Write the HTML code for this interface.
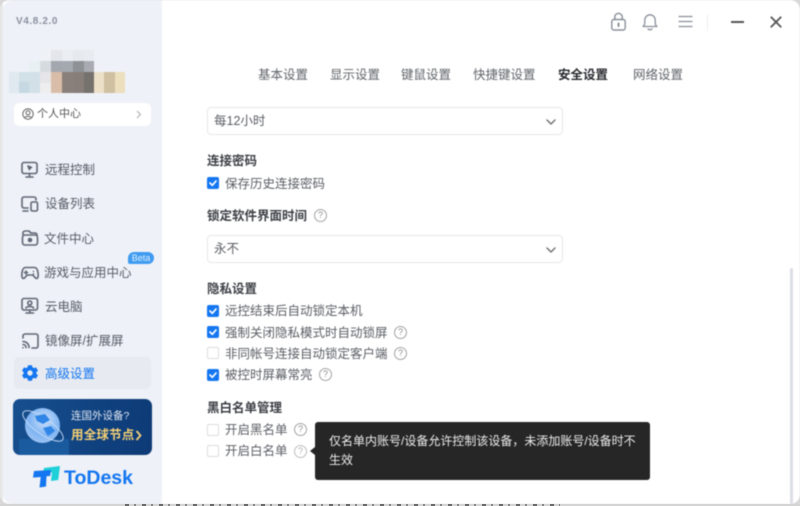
<!DOCTYPE html>
<html lang="zh"><head><meta charset="utf-8"><style>
*{box-sizing:border-box}
html,body{margin:0;padding:0;width:800px;height:506px;overflow:hidden;background:#d8d8d8}
body{position:relative;font-family:"Liberation Sans","Noto Sans CJK SC",sans-serif;color:#555a63}
.abs{position:absolute}
.t{position:absolute;white-space:nowrap;line-height:16px}
#win{position:absolute;left:0;top:0;width:800px;height:504px;background:#fff;border-radius:10px;overflow:hidden;filter:blur(.4px)}
#side{position:absolute;left:3px;top:0;width:159px;height:504px;background:#eef1f7;border-radius:10px 0 0 10px}
#leftedge{position:absolute;left:0;top:0;width:3px;height:504px;background:#e8e8e8}
.nav{position:absolute;left:44px;font-size:12.5px;color:#565b66;line-height:16px;white-space:nowrap}
.ni{position:absolute;left:20px;width:20px;height:20px;fill:none;stroke:#5f6675;stroke-width:1.6;stroke-linecap:round;stroke-linejoin:round}
.tab{position:absolute;top:67px;font-size:12.5px;color:#5f6368;line-height:16px;white-space:nowrap}
.h{position:absolute;left:207px;font-size:12.5px;font-weight:700;color:#3c3f45;line-height:16px;white-space:nowrap}
.l{position:absolute;left:225px;font-size:12.5px;color:#5b5e64;line-height:16px;white-space:nowrap}
.c{position:absolute;left:207px;width:12px;height:12px;border-radius:2px;background:#1476f0}
.c svg{position:absolute;left:0;top:0;width:12px;height:12px;fill:none;stroke:#fff;stroke-width:1.7;stroke-linecap:round;stroke-linejoin:round}
.u{position:absolute;left:207px;width:12px;height:12px;border-radius:2px;background:#fff;border:1px solid #dcdcdc}
.q{position:absolute;width:13px;height:13px;border:1px solid #a2a2a2;border-radius:50%;font-size:9px;line-height:11px;text-align:center;color:#8d8d8d}
.sel{position:absolute;left:207px;width:356px;height:28px;border:1px solid #e7e7e7;border-radius:4px;background:#fff}
.sel span{position:absolute;left:6px;top:5px;font-size:12.5px;line-height:16px;color:#5b5e64;white-space:nowrap}
.sel svg{position:absolute;left:337px;top:8px;width:12px;height:12px;fill:none;stroke:#6d6d6d;stroke-width:1.4;stroke-linecap:round;stroke-linejoin:round}
.px{position:absolute}
</style></head><body>
<div id="win">
<div id="leftedge"></div>
<div id="side"></div>
<div class="t" style="left:16px;top:14px;font-size:10px;font-weight:700;color:#8a90a0;letter-spacing:.6px">V4.8.2.0</div>

<!-- blurred avatar / name mosaic -->
<div class="px" style="left:40px;top:50px;width:11px;height:11px;background:#eef1f5"></div>
<div class="px" style="left:51px;top:50px;width:11px;height:11px;background:#e3e6eb"></div>
<div class="px" style="left:62px;top:50px;width:11px;height:11px;background:#eaedf2"></div>
<div class="px" style="left:73px;top:50px;width:11px;height:11px;background:#e6e9ed"></div>
<div class="px" style="left:84px;top:50px;width:10px;height:11px;background:#e8ebef"></div>
<div class="px" style="left:29px;top:61px;width:11px;height:11px;background:#e8f0f3"></div>
<div class="px" style="left:40px;top:61px;width:11px;height:11px;background:#d6dbe0"></div>
<div class="px" style="left:51px;top:61px;width:11px;height:11px;background:#a3a7ae"></div>
<div class="px" style="left:62px;top:61px;width:11px;height:11px;background:#a4a8af"></div>
<div class="px" style="left:73px;top:61px;width:11px;height:11px;background:#8e9297"></div>
<div class="px" style="left:84px;top:61px;width:10px;height:11px;background:#a8abb1"></div>
<div class="px" style="left:9px;top:72px;width:10px;height:21px;background:#dfe9ef"></div>
<div class="px" style="left:19px;top:72px;width:21px;height:10px;background:#d2e0e8"></div>
<div class="px" style="left:19px;top:82px;width:10px;height:11px;background:#c6d8e2"></div>
<div class="px" style="left:29px;top:82px;width:11px;height:11px;background:#d2e0e8"></div>
<div class="px" style="left:40px;top:72px;width:11px;height:11px;background:#e6e6e8"></div>
<div class="px" style="left:40px;top:83px;width:11px;height:10px;background:#eeeeee"></div>
<div class="px" style="left:51px;top:72px;width:11px;height:21px;background:#dabda8"></div>
<div class="px" style="left:62px;top:72px;width:11px;height:21px;background:#8a807b"></div>
<div class="px" style="left:73px;top:72px;width:11px;height:21px;background:#877e7a"></div>
<div class="px" style="left:84px;top:72px;width:10px;height:21px;background:#75716d"></div>
<div class="px" style="left:94px;top:72px;width:10px;height:21px;background:#ece0c8"></div>
<div class="px" style="left:104px;top:72px;width:11px;height:21px;background:#d0c0a2"></div>
<div class="px" style="left:115px;top:72px;width:10px;height:21px;background:#ecdfbe"></div>

<!-- personal center -->
<div class="abs" style="left:14px;top:103px;width:137px;height:23px;background:#fff;border-radius:5px"></div>
<svg class="abs" style="left:22px;top:108px;width:12px;height:12px;fill:none;stroke:#666;stroke-width:1" viewBox="0 0 12 12"><circle cx="6" cy="6" r="5.2"/><circle cx="6" cy="4.8" r="2"/><path d="M2.8 9.6c1-1.6 5.4-1.6 6.4 0"/></svg>
<div class="t" style="left:37px;top:106px;font-size:11px;color:#555">个人中心</div>
<svg class="abs" style="left:136px;top:110px;width:6px;height:9px;fill:none;stroke:#aaa;stroke-width:1" viewBox="0 0 6 9"><path d="M1 1l3.5 3.5L1 8"/></svg>

<!-- nav -->
<svg class="ni" style="top:160px" viewBox="0 0 20 20"><rect x="2" y="2.5" width="15" height="11" rx="2"/><path d="M9.5 13.5v3M6 17h7"/><path d="M8 6l3.5 1.5-1.5.6-.6 1.5z" fill="#5f6675"/></svg>
<div class="nav" style="top:162px;left:45px">远程控制</div>
<svg class="ni" style="top:194px" viewBox="0 0 20 20"><path d="M8 14H4a2 2 0 0 1-2-2V5a2 2 0 0 1 2-2h10a2 2 0 0 1 2 2v1"/><rect x="11" y="8" width="6.5" height="9" rx="1.5"/><path d="M3 17h5"/></svg>
<div class="nav" style="top:196px;left:45px">设备列表</div>
<svg class="ni" style="top:228px" viewBox="0 0 20 20"><path d="M3 7V5a2 2 0 0 1 2-2h4l2 2h4a2 2 0 0 1 2 2"/><rect x="2.5" y="7" width="15" height="10" rx="2.500"/><circle cx="10" cy="12" r="1.5" fill="#5f6675"/></svg>
<div class="nav" style="top:231px">文件中心</div>
<svg class="ni" style="top:263px" viewBox="0 0 20 20"><path d="M5.5 4.5h9c2 0 3 1.500 3.500 5 .5 3.500 0 6-1.500 6-1.500 0-2.500-3-4-3.500H7.500c-1.500.5-2.500 3.500-4 3.500S1.500 13 2 9.500c.5-3.500 1.500-5 3.500-5z"/><path d="M6 8v3M4.500 9.500h3M13.500 8.500v.01M13.500 11v.01"/></svg>
<div class="nav" style="top:265px">游戏与应用中心</div>
<div class="abs" style="left:128px;top:252px;width:26px;height:12px;background:#3f9bf0;border-radius:6px 6px 6px 2px;color:#dcefff;font-size:9px;line-height:12px;text-align:center">Beta</div>
<svg class="ni" style="top:296px" viewBox="0 0 20 20"><rect x="2" y="2.5" width="15.500" height="11.500" rx="2"/><path d="M9.800 14v2.500M6 17h7.500"/><circle cx="9.800" cy="7" r="2"/><path d="M6 12c.5-2 7-2 7.500 0"/></svg>
<div class="nav" style="top:299px;left:45px">云电脑</div>
<svg class="ni" style="top:331px" viewBox="0 0 20 20"><path d="M3 7V5a2 2 0 0 1 2-2h11a2 2 0 0 1 2 2v10a2 2 0 0 1-2 2h-4"/><path d="M3 10.500c3.500 0 6 2.500 6 6M3 13.500c1.700 0 3 1.300 3 3"/><path d="M3 16.700v.01"/></svg>
<div class="nav" style="top:333px;left:45px">镜像屏/扩展屏</div>
<div class="abs" style="left:14px;top:357px;width:137px;height:32px;background:#e7ebf1;border-radius:5px"></div>
<svg class="abs" style="left:21px;top:364px;width:18px;height:18px" viewBox="0 0 18 18"><path fill="#1476f0" fill-rule="evenodd" d="M7 1.200h4l.5 2.200 1.300.7 2.200-.7 2 3.400-1.700 1.500v1.400l1.700 1.500-2 3.400-2.200-.7-1.300.7-.5 2.200H7l-.5-2.200-1.300-.7-2.200.7-2-3.400 1.700-1.500V8.300L1 6.800l2-3.400 2.200.7 1.300-.7zM9 6.300a2.700 2.700 0 1 0 0 5.400 2.700 2.700 0 0 0 0-5.400z"/></svg>
<div class="nav" style="top:366px;left:45px;color:#1476f0">高级设置</div>

<!-- banner -->
<div class="abs" style="left:13px;top:399px;width:139px;height:56px;border-radius:7px;background:linear-gradient(100deg,#17508f,#0f3f7d 70%,#0e3b76);overflow:hidden">
  <div class="abs" style="left:6px;top:40px;width:50px;height:16px;background:#1a5a9e"></div>
  <div class="abs" style="left:12px;top:9px;width:35px;height:35px;border-radius:50%;background:radial-gradient(circle at 55% 35%,#cfe2fb,#7fb4f2 50%,#a9c9f5 90%)"></div>
  <svg class="abs" style="left:6px;top:5px;width:48px;height:44px;fill:none;stroke:#c6dcf6;stroke-width:.9" viewBox="0 0 48 44"><ellipse cx="24" cy="22" rx="24" ry="8" transform="rotate(35 24 22)"/><path fill="#2f86e6" stroke="none" d="M16 12l10-2 5 6-7 4-6-3zM24 24l8-2 4 5-7 5z"/></svg>
</div>
<div class="t" style="left:71px;top:408px;font-size:10.5px;color:#dfe7f2">连国外设备?</div>
<div class="t" style="left:71px;top:427px;font-size:12.5px;font-weight:700;color:#f4cf74;letter-spacing:.2px">用全球节点</div>
<svg class="abs" style="left:135px;top:430px;width:8px;height:11px;fill:none;stroke:#f4cf74;stroke-width:1.8" viewBox="0 0 8 11"><path d="M1.500 1l4 4.500-4 4.500"/></svg>

<!-- logo -->
<svg class="abs" style="left:33px;top:465px;width:28px;height:23px" viewBox="0 0 28 23"><path fill="#1fd0d8" d="M11 3L27 1l-1.800 14-7.200 1 1-8.500-9 .8z"/><path fill="#1476f0" d="M1 6l17-1-.8 6-3.700.3L13 21.500l-6.500 1L7.700 12 0 12.600z"/></svg>
<div class="t" style="left:64px;top:468px;font-size:19.5px;line-height:20px;font-weight:700;color:#1476f0">ToDesk</div>

<!-- top icons -->
<svg class="abs" style="left:610px;top:12px;width:17px;height:20px;fill:none;stroke:#8a8f9a;stroke-width:1.4;stroke-linecap:round" viewBox="0 0 17 20"><rect x="1.800" y="7.500" width="13.400" height="10.500" rx="2"/><path d="M4.800 7.500V5a3.700 3.700 0 0 1 7.400 0v2.500"/><path d="M8.500 11.500v2.500" stroke-width="2"/></svg>
<svg class="abs" style="left:641px;top:13px;width:18px;height:18px;fill:none;stroke:#8a8f9a;stroke-width:1.3;stroke-linecap:round;stroke-linejoin:round" viewBox="0 0 18 18"><path d="M2 13.500c1.300-1 1.800-2 1.800-4V7a5.200 5.200 0 0 1 10.400 0v2.500c0 2 .5 3 1.800 4z"/><path d="M7 16c1 1 3 1 4 0"/></svg>
<svg class="abs" style="left:678px;top:15px;width:15px;height:13px;stroke:#8a8f9a;stroke-width:1.3;fill:none" viewBox="0 0 15 13"><path d="M.5 1.500h14M.5 6.500h14M.5 11.500h14"/></svg>
<div class="abs" style="left:707px;top:14px;width:1px;height:17px;background:#eeeeee"></div>
<div class="abs" style="left:731px;top:21px;width:13px;height:2px;background:#555"></div>
<svg class="abs" style="left:770px;top:16px;width:12px;height:12px;stroke:#555;stroke-width:1.8;fill:none" viewBox="0 0 12 12"><path d="M.8.800l10.400 10.400M11.200.800L.8 11.200"/></svg>

<!-- tabs -->
<div class="tab" style="left:258px">基本设置</div>
<div class="tab" style="left:330px">显示设置</div>
<div class="tab" style="left:401px">键鼠设置</div>
<div class="tab" style="left:473px">快捷键设置</div>
<div class="tab" style="left:558px;color:#27292d;font-weight:700">安全设置</div>
<div class="tab" style="left:633px">网络设置</div>

<!-- content -->
<div class="sel" style="top:107px"><span>每12小时</span><svg viewBox="0 0 12 12"><path d="M2 4l4 4 4-4"/></svg></div>
<div class="h" style="top:153px">连接密码</div>
<div class="c" style="top:177px"><svg viewBox="0 0 12 12"><path d="M3 6l2.300 2.300L9 4"/></svg></div>
<div class="l" style="top:176px">保存历史连接密码</div>
<div class="h" style="top:208px">锁定软件界面时间</div>
<div class="q" style="left:314px;top:209px">?</div>
<div class="sel" style="top:235px"><span>永不</span><svg viewBox="0 0 12 12"><path d="M2 4l4 4 4-4"/></svg></div>
<div class="h" style="top:281px">隐私设置</div>
<div class="c" style="top:305px"><svg viewBox="0 0 12 12"><path d="M3 6l2.300 2.300L9 4"/></svg></div>
<div class="l" style="top:303px">远控结束后自动锁定本机</div>
<div class="c" style="top:326px"><svg viewBox="0 0 12 12"><path d="M3 6l2.300 2.300L9 4"/></svg></div>
<div class="l" style="top:325px">强制关闭隐私模式时自动锁屏</div>
<div class="q" style="left:394px;top:326px">?</div>
<div class="u" style="top:347px"></div>
<div class="l" style="top:346px">非同帐号连接自动锁定客户端</div>
<div class="q" style="left:394px;top:347px">?</div>
<div class="c" style="top:369px"><svg viewBox="0 0 12 12"><path d="M3 6l2.300 2.300L9 4"/></svg></div>
<div class="l" style="top:367px">被控时屏幕常亮</div>
<div class="q" style="left:319px;top:368px">?</div>
<div class="h" style="top:400px">黑白名单管理</div>
<div class="u" style="top:424px"></div>
<div class="l" style="top:422px">开启黑名单</div>
<div class="q" style="left:294px;top:423px">?</div>
<div class="u" style="top:445px"></div>
<div class="l" style="top:443px">开启白名单</div>
<div class="q" style="left:294px;top:445px;opacity:.7">?</div>

<!-- tooltip -->
<div class="abs" style="left:315px;top:422px;width:335px;height:58px;background:#262626;border-radius:3px"></div>
<div class="abs" style="left:310px;top:447px;width:0;height:0;border-top:4px solid transparent;border-bottom:4px solid transparent;border-right:5px solid #262626"></div>
<div class="t" style="left:329px;top:432px;font-size:12px;color:#ececec;line-height:19px">仅名单内账号/设备允许控制该设备，未添加账号/设备时不</div>
<div class="t" style="left:329px;top:451px;font-size:12px;color:#ececec;line-height:19px">生效</div>

<!-- scrollbar -->
<div class="abs" style="left:790px;top:268px;width:3px;height:236px;background:#dcdee6;border-radius:2px"></div>
</div>

<!-- remnants of text behind the window -->
<div class="abs" style="left:0;top:504px;width:800px;height:2px;background:#d4d4d4"></div>
<div class="abs" style="left:125px;top:504px;width:435px;height:2px;background:repeating-linear-gradient(90deg,#6a6a6a 0 4px,#d4d4d4 4px 9px,#888 9px 11px,#d4d4d4 11px 17px)"></div>
</body></html>
